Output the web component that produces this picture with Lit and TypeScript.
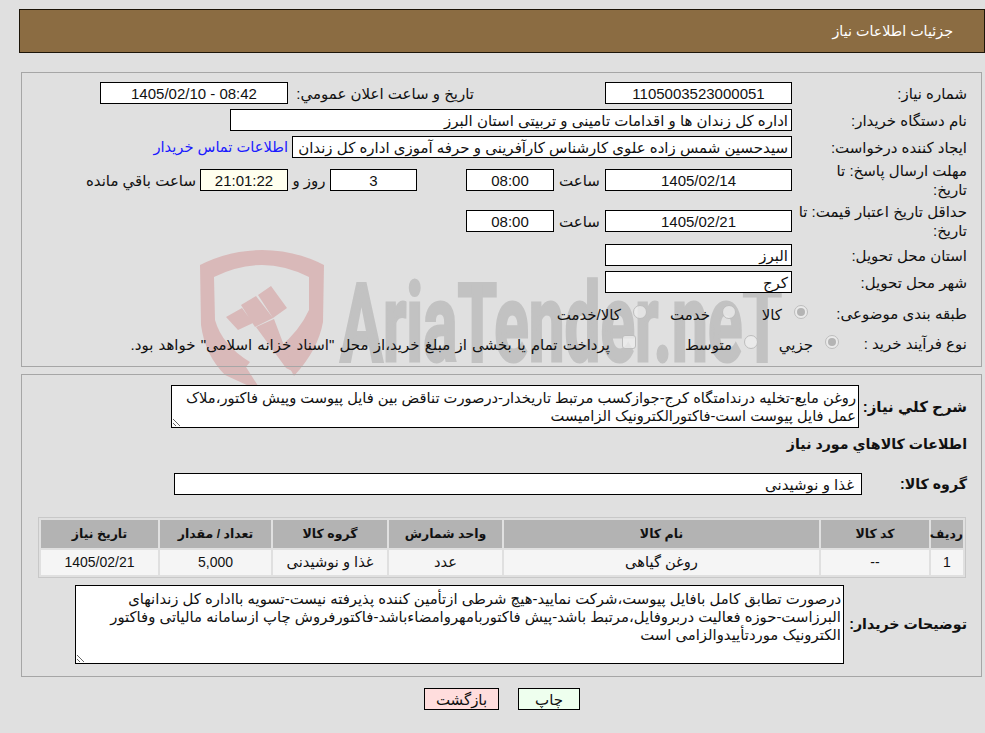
import { LitElement, html, css, svg } from "lit";
import { customElement } from "lit/decorators.js";

const rows = [
  { name: "روغن گیاهی" },
];

@customElement("app-root")
export class AppRoot extends LitElement {
  static styles = css`
    :host {
      display: block;
      position: relative;
      width: 985px;
      height: 733px;
      overflow: hidden;
      background: #e0e0e0;
      color: #111;
      direction: rtl;
      font-family: "Liberation Sans", "DejaVu Sans", sans-serif;
      font-size: 15px;
      line-height: 17px;
    }
    .wm { position: absolute; left: 0; top: 0; }
    .page { position: relative; display: flex; flex-direction: column; padding-top: 9px; }
    .title {
      box-sizing: border-box; height: 44px; margin-left: 19px;
      background: #8b6c42; border: 1px solid #1c1408; color: #fff;
      display: flex; align-items: center; padding-right: 31px; font-size: 14.3px;
    }
    .panel {
      box-sizing: border-box; margin: 0 3px 0 21px;
      border: 1px solid #a6a6a6; padding-right: 14px;
    }
    .p1 { margin-top: 19px; height: 295px; padding-top: 9px; display: flex; flex-direction: column; gap: 5px; }
    .p2 { margin-top: 7px; height: 303px; padding-top: 10px; }
    .row { display: flex; align-items: center; min-height: 22px; }
    .lbl { width: 175px; flex: none; }
    .tall { margin-top: -2px; line-height: 19px; }
    .after-tall { margin-top: -1px; }
    .box {
      box-sizing: border-box; height: 22px; flex: none; background: #fff;
      border: 1px solid #000; display: flex; align-items: center; justify-content: center;
      white-space: nowrap; overflow: hidden;
    }
    .w187 { width: 187px; }
    .w188 { width: 188px; }
    .w88 { width: 88px; }
    .w87 { width: 87px; }
    .wide1 { width: 562px; }
    .wide2 { width: 500px; }
    .start { justify-content: flex-start; padding: 0 3px; }
    .ivory { background: #ffffee; }
    .ltr { direction: ltr; }
    .pub { width: 180px; margin-right: 131px; margin-left: 6px; flex: none; }
    .link { color: #1a1aff; margin-right: 4px; font-size: 14.67px; }
    .hour { width: 51px; text-align: center; flex: none; }
    .gap49 { width: 49px; flex: none; }
    .day { width: 42px; text-align: center; flex: none; }
    .left { margin-right: 4px; white-space: nowrap; }
    .r8 { margin-top: 4px; }
    .r9 { margin-top: 3px; }
    .opts { display: flex; align-items: center; }
    .o8 { margin-right: -16px; }
    .o9 { margin-right: -47px; }
    .opt { display: flex; align-items: center; flex: none; white-space: nowrap; }
    .w72 { width: 72px; }
    .w89 { width: 89px; }
    .w81 { width: 81px; }
    .w122 { width: 122px; }
    .radio {
      box-sizing: border-box; width: 14px; height: 14px; border-radius: 50%; flex: none;
      border: 1px solid #bdbdbd; background: rgba(238, 238, 238, 0.75);
      display: flex; align-items: center; justify-content: center; margin: 0 0 2px 12px;
    }
    .radio.on::after { content: ""; width: 8px; height: 8px; border-radius: 50%; background: #b4b4b4; }
    .radio.sq { border-radius: 3px; }
    .opt-text { padding-top: 2px; }
    .long { word-spacing: 1px; }
    .b { font-weight: bold; font-size: 15px; }
    .b14 { font-weight: bold; font-size: 14.2px; white-space: nowrap; }
    textarea {
      box-sizing: border-box; display: block; flex: none; background: #fff; color: #111;
      border: 1px solid #000; border-radius: 0; outline: none; margin: 0; padding: 3px 2px 2px;
      font: inherit; line-height: 18px; direction: rtl;
    }
    .ta1 { width: 688px; height: 43px; font-size: 14.67px; }
    .ta2 { width: 769px; height: 79px; padding-top: 4px; font-size: 14.85px; }
    .l108 { width: 108px; flex: none; }
    .l105 { width: 105px; flex: none; }
    .l123 { width: 123px; flex: none; }
    .heading { margin-top: 8px; height: 18px; }
    .group { margin-top: 19px; }
    .group .box { width: 688px; justify-content: flex-start; padding-right: 7px; }
    table {
      margin: 22px 1px 0 0; width: 928px; table-layout: fixed; border-collapse: separate;
      border-spacing: 2px; border: 1px solid #c8c8c8; font-size: 14.67px;
    }
    th { background: #b3b3b3; height: 28px; padding: 0; font-size: 12.5px; font-weight: bold; }
    td { background: #f5f5f5; height: 25px; padding: 0; text-align: center; }
    td.num { font-size: 14px; }
    .c32 { width: 32px; }
    .c108 { width: 108px; }
    .c315 { width: 315px; }
    .c113 { width: 113px; }
    .c114 { width: 114px; }
    .c111 { width: 111px; }
    .c117 { width: 117px; }
    .note { margin-top: 7px; }
    .btns { display: flex; justify-content: center; gap: 19px; margin: 11px 0 0 0; direction: ltr; padding-left: 19px; }
    .btn {
      box-sizing: border-box; height: 22px; border: 1px solid #000; display: flex;
      align-items: center; justify-content: center;
    }
    .back { width: 75px; background: #ffdddd; }
    .print { width: 62px; background: #eeffee; }
  `;

  private watermark() {
    return svg`<svg class="wm" width="985" height="733" viewBox="0 0 985 733">
      <path fill="#d9b9b9" fill-rule="evenodd" d="M200 265 Q230 250 262 250 Q295 250 324 265 L323 322 Q318 350 294 376 L279 348 Q300 330 309 310 L309 277 Q285 265 262 265 Q238 265 214 277 L215 320 Q222 345 250 362 L246 367 L262 392 L225 375 Q205 355 201 325 Z"/>
      <path fill="#d9b9b9" d="M226 317 L242 308 L253 323 L238 330 Z M241 305 L256 296 L273 318 L255 327 Z M258 295 L271 286 L287 308 L273 318 Z M256 327 L274 319 L294 372 L286 368 Z"/>
      <text x="340" y="361" fill="#c2c2c2" stroke="#c2c2c2" stroke-width="3" font-family="Roboto, sans-serif" font-weight="700" font-size="110" direction="ltr" textLength="442" lengthAdjust="spacingAndGlyphs">AriaTender.neT</text>
    </svg>`;
  }

  render() {
    return html`
      ${this.watermark()}
      <div class="page">
        <div class="title">جزئیات اطلاعات نیاز</div>
        <div class="panel p1">
          <div class="row">
            <div class="lbl">شماره نیاز:</div>
            <div class="box w187">1105003523000051</div>
            <div class="pub">تاریخ و ساعت اعلان عمومي:</div>
            <div class="box w188 ltr">1405/02/10 - 08:42</div>
          </div>
          <div class="row">
            <div class="lbl">نام دستگاه خریدار:</div>
            <div class="box wide1 start">اداره کل زندان ها و اقدامات تامینی و تربیتی استان البرز</div>
          </div>
          <div class="row">
            <div class="lbl">ایجاد کننده درخواست:</div>
            <div class="box wide2 start">سیدحسین شمس زاده علوی کارشناس کارآفرینی و حرفه آموزی اداره کل زندان</div>
            <div class="link">اطلاعات تماس خریدار</div>
          </div>
          <div class="row tall">
            <div class="lbl">مهلت ارسال پاسخ: تا<br />تاریخ:</div>
            <div class="box w187">1405/02/14</div>
            <div class="hour">ساعت</div>
            <div class="box w88">08:00</div>
            <div class="gap49"></div>
            <div class="box w87">3</div>
            <div class="day">روز و</div>
            <div class="box w88 ivory">21:01:22</div>
            <div class="left">ساعت باقي مانده</div>
          </div>
          <div class="row tall">
            <div class="lbl">حداقل تاریخ اعتبار قیمت: تا<br />تاریخ:</div>
            <div class="box w187">1405/02/21</div>
            <div class="hour">ساعت</div>
            <div class="box w88">08:00</div>
          </div>
          <div class="row after-tall">
            <div class="lbl">استان محل تحویل:</div>
            <div class="box w187 start">البرز</div>
          </div>
          <div class="row">
            <div class="lbl">شهر محل تحویل:</div>
            <div class="box w187 start">کرج</div>
          </div>
          <div class="row r8">
            <div class="lbl">طبقه بندی موضوعی:</div>
            <div class="opts o8">
              <div class="opt w72"><span class="radio on"></span><span class="opt-text">کالا</span></div>
              <div class="opt w89"><span class="radio"></span><span class="opt-text">خدمت</span></div>
              <div class="opt"><span class="radio"></span><span class="opt-text">کالا/خدمت</span></div>
            </div>
          </div>
          <div class="row r9">
            <div class="lbl">نوع فرآیند خرید :</div>
            <div class="opts o9">
              <div class="opt w81"><span class="radio on"></span><span class="opt-text">جزيي</span></div>
              <div class="opt w122"><span class="radio"></span><span class="opt-text">متوسط</span></div>
              <div class="opt"><span class="radio sq"></span><span class="opt-text long">پرداخت تمام یا بخشی از مبلغ خرید،از محل "اسناد خزانه اسلامی" خواهد بود.</span></div>
            </div>
          </div>
        </div>
        <div class="panel p2">
          <div class="row">
            <div class="l108 b">شرح كلي نياز:</div>
            <textarea class="ta1" readonly>روغن مایع-تخلیه درندامتگاه کرج-جوازکسب مرتبط تاریخدار-درصورت تناقض بین فایل پیوست وپیش فاکتور،ملاک عمل فایل پیوست است-فاکتورالکترونیک الزامیست</textarea>
          </div>
          <div class="heading b14">اطلاعات كالاهاي مورد نياز</div>
          <div class="row group">
            <div class="l105 b14">گروه کالا:</div>
            <div class="box">غذا و نوشیدنی</div>
          </div>
          <table>
            <colgroup>
              <col class="c32" /><col class="c108" /><col class="c315" />
              <col class="c113" /><col class="c114" /><col class="c111" /><col class="c117" />
            </colgroup>
            <thead>
              <tr>
                <th>ردیف</th><th>کد کالا</th><th>نام کالا</th><th>واحد شمارش</th>
                <th>گروه کالا</th><th>تعداد / مقدار</th><th>تاریخ نیاز</th>
              </tr>
            </thead>
            <tbody>
              ${rows.map(
                (r, i) => html`<tr>
                  <td class="num">${i + 1}</td><td class="num">--</td><td>${r.name}</td><td>عدد</td>
                  <td>غذا و نوشیدنی</td><td class="num">5,000</td><td class="num">1405/02/21</td>
                </tr>`
              )}
            </tbody>
          </table>
          <div class="row note">
            <div class="l123 b14">توضیحات خریدار:</div>
            <textarea class="ta2" readonly>درصورت تطابق کامل بافایل پیوست،شرکت نمایید-هیچ شرطی ازتأمین کننده پذیرفته نیست-تسویه بااداره کل زندانهای البرزاست-حوزه فعالیت دربروفایل،مرتبط باشد-پیش فاکتوربامهروامضاءباشد-فاکتورفروش چاپ ازسامانه مالیاتی وفاکتور الکترونیک موردتأییدوالزامی است</textarea>
          </div>
        </div>
        <div class="btns">
          <div class="btn back">بازگشت</div>
          <div class="btn print">چاپ</div>
        </div>
      </div>
    `;
  }
}
